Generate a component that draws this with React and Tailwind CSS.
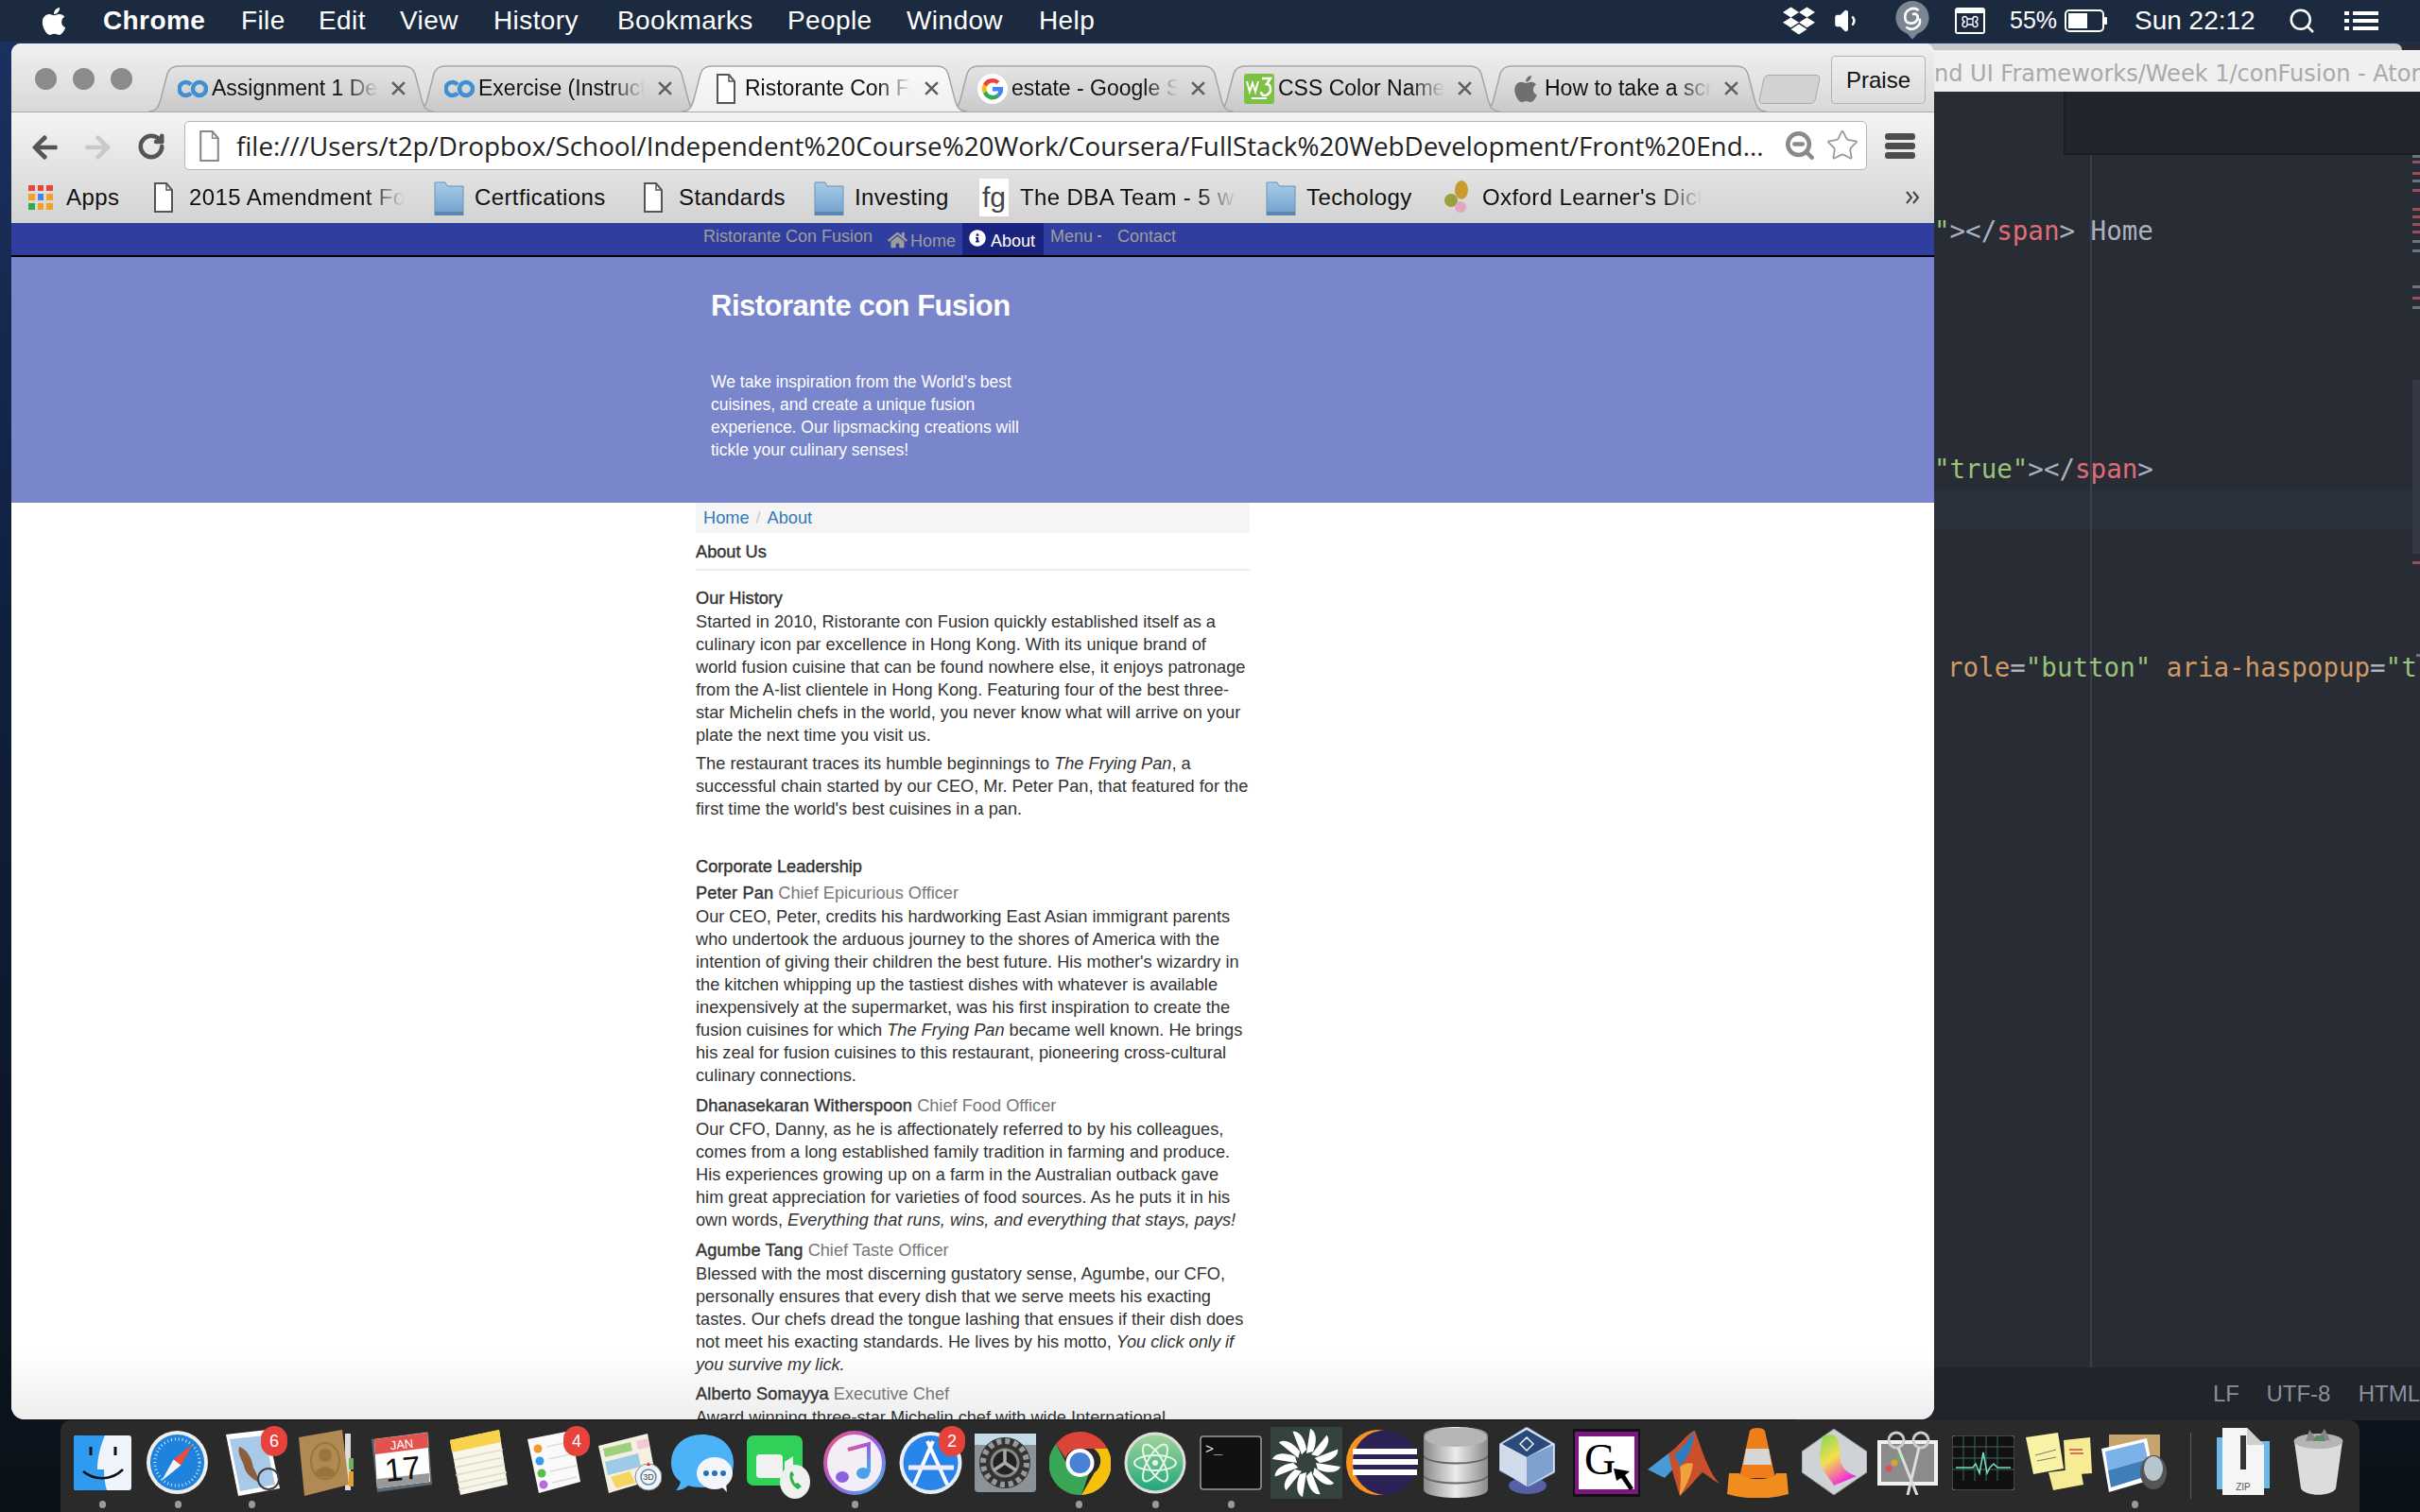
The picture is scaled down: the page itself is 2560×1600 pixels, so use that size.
import { FaApple, FaDropbox, FaHome, FaInfoCircle, FaArrowLeft, FaArrowRight } from "react-icons/fa";
import { RotateCw, Search, Star, Volume1, ZoomOut } from "lucide-react";

const FileIcon = ({ className }) => (
  <svg viewBox="0 0 20 32" className={className}>
    <path d="M1 1h12l6 7v23H1z" fill="#fff" stroke="#555" strokeWidth="2" />
    <path d="M13 1v7h6" fill="none" stroke="#555" strokeWidth="1.5" />
  </svg>
);

const FolderIcon = () => (
  <svg viewBox="0 0 32 38" className="h-[38px] w-[32px] shrink-0">
    <defs>
      <linearGradient id="fold" x1="0" y1="0" x2="0" y2="1">
        <stop offset="0" stopColor="#a9cbe8" />
        <stop offset="1" stopColor="#6fa0cc" />
      </linearGradient>
    </defs>
    <path d="M1 3h11l2 4h17v31H1z" fill="url(#fold)" stroke="#6d93b5" strokeWidth="1" />
    <rect x="1" y="34" width="30" height="4" fill="#5b86ad" />
  </svg>
);

const Coursera = () => (
  <svg viewBox="0 0 32 22" className="h-[22px] w-[32px] shrink-0">
    <path d="M14 6.500A7 7 0 1 0 14 15.500" fill="none" stroke="#3f8fd2" strokeWidth="4.5" />
    <circle cx="23" cy="11" r="7" fill="none" stroke="#3f8fd2" strokeWidth="4.5" />
  </svg>
);

const GoogleG = () => (
  <svg viewBox="0 0 32 32" className="h-[32px] w-[32px] shrink-0">
    <circle cx="16" cy="16" r="16" fill="#fff" />
    <path d="M16 5a11 11 0 0 1 7.500 3l-3.200 3A6.600 6.600 0 0 0 9.800 13.800L6 11A11 11 0 0 1 16 5z" fill="#ea4335" />
    <path d="M6 11l3.800 2.800a6.800 6.800 0 0 0 0 4.400L6 21a11 11 0 0 1 0-10z" fill="#fbbc05" />
    <path d="M6 21l3.800-2.800a6.600 6.600 0 0 0 10 3.500l3.600 2.800A11 11 0 0 1 6 21z" fill="#34a853" />
    <path d="M27 14H16v4.400h6.300a5.500 5.500 0 0 1-2.500 3.300l3.600 2.800A11 11 0 0 0 27 14z" fill="#4285f4" />
  </svg>
);

const W3 = () => (
  <svg viewBox="0 0 32 32" className="h-[32px] w-[32px] shrink-0">
    <rect width="32" height="32" rx="3" fill="#7cc242" />
    <path d="M3 8l3 11 3-9 3 9 3-11" fill="none" stroke="#fff" strokeWidth="2" />
    <path d="M19 5h9l-4 6c3 0 4 3 4 6s-3 6-6 6-4-2-4-4" fill="none" stroke="#fff" strokeWidth="2.5" />
    <rect x="8" y="25" width="16" height="2" fill="#fff" />
  </svg>
);

const tabs = [
  { label: "Assignment 1 Description", icon: <Coursera />, z: "z-[6]" },
  { label: "Exercise (Instructions)", icon: <Coursera />, z: "z-[5]" },
  { label: "Ristorante Con Fusion", icon: <FileIcon className="h-[32px] w-[20px] shrink-0" />, z: "z-[9]", active: true },
  { label: "estate - Google Search", icon: <GoogleG />, z: "z-[4]" },
  { label: "CSS Color Names", icon: <W3 />, z: "z-[3]" },
  { label: "How to take a screenshot", icon: <FaApple className="h-[32px] w-[30px] shrink-0 text-[#6f6f6f]" />, z: "z-[2]" },
];

const Tab = ({ label, icon, z, active }) => (
  <div className={`relative -mr-[20px] flex h-[49px] w-[302px] shrink-0 items-center pl-[31px] ${z}`}>
    <svg viewBox="0 0 302 49" preserveAspectRatio="none" className="absolute inset-0 h-full w-full">
      <defs>
        <linearGradient id="tabOn" x1="0" y1="0" x2="0" y2="1">
          <stop offset="0" stopColor="#fafafa" />
          <stop offset="1" stopColor="#efefef" />
        </linearGradient>
        <linearGradient id="tabOff" x1="0" y1="0" x2="0" y2="1">
          <stop offset="0" stopColor="#e4e4e4" />
          <stop offset="1" stopColor="#c9c9c9" />
        </linearGradient>
      </defs>
      <path
        d="M0 49C8 49 11 44 13 36L20 9C22 3 26 1 32 1H270C276 1 280 3 282 9L289 36C291 44 294 49 302 49"
        fill={active ? "url(#tabOn)" : "url(#tabOff)"}
        stroke="#a5a5a5"
        strokeWidth="1.5"
      />
    </svg>
    <div className="relative flex w-[225px] items-center gap-[4px]">
      <div className="flex w-[32px] shrink-0 justify-center">{icon}</div>
      <span className="w-[180px] overflow-hidden whitespace-nowrap text-[23px] text-[#111] [mask-image:linear-gradient(to_right,black_78%,transparent_98%)]">
        {label}
      </span>
    </div>
    <svg viewBox="0 0 16 16" className="relative h-[17px] w-[17px] shrink-0">
      <path d="M2 2l12 12M14 2L2 14" stroke="#5f5f5f" strokeWidth="2.4" />
    </svg>
  </div>
);

const Bookmark = ({ icon, label, text, fade }) => (
  <div className="flex shrink-0 items-center">
    {icon}
    <span
      className={
        "overflow-hidden whitespace-nowrap text-[24px] tracking-[0.4px] text-[#111] " + text + (fade ? " [mask-image:linear-gradient(to_right,black_82%,transparent)]" : "")
      }
    >
      {label}
    </span>
  </div>
);

const AppsIcon = () => (
  <div className="grid h-[26px] w-[26px] shrink-0 grid-cols-3 gap-[3px]">
    {["bg-[#e8453c]", "bg-[#e8453c]", "bg-[#e8453c]", "bg-[#f4a020]", "bg-[#3f87e8]", "bg-[#f4a020]", "bg-[#34a853]", "bg-[#f4a020]", "bg-[#f4a020]"].map((c, i) => (
      <span key={i} className={c} />
    ))}
  </div>
);

const FgIcon = () => (
  <div className="flex h-[40px] w-[31px] shrink-0 items-center justify-center bg-white text-[30px] leading-none text-[#444]">
    fg
  </div>
);

const OxfordIcon = () => (
  <svg viewBox="0 0 28 38" className="h-[38px] w-[28px] shrink-0">
    <ellipse cx="19" cy="11" rx="7" ry="10" fill="#c89b2c" />
    <circle cx="8" cy="22" r="7" fill="#9aa13a" />
    <circle cx="18" cy="29" r="6" fill="#e3a6c0" />
  </svg>
);

const Chevrons = () => (
  <svg viewBox="0 0 16 14" className="h-[16px] w-[16px]">
    <path d="M2 1l5 6-5 6M9 1l5 6-5 6" fill="none" stroke="#444" strokeWidth="2" />
  </svg>
);

const Toolbar = () => (
  <div className="flex h-[72px] items-start">
    <FaArrowLeft className="ml-[19px] mt-[22px] h-[30px] w-[33px] text-[#555]" />
    <FaArrowRight className="ml-[23px] mt-[22px] h-[30px] w-[33px] text-[#c9c9c9]" />
    <RotateCw className="ml-[25px] mt-[21px] h-[30px] w-[30px] text-[#555]" strokeWidth={3.6} />
    <div className="ml-[20px] mt-[9px] flex h-[52px] w-[1780px] items-center rounded-[5px] border border-[#b5b5b5] bg-white pl-[14px] pr-[8px]">
      <FileIcon className="h-[33px] w-[23px] shrink-0 opacity-70" />
      <span className="ml-[17px] w-[1619px] shrink-0 overflow-hidden whitespace-nowrap font-['Open_Sans',sans-serif] text-[27.8px] leading-[50px] text-[#222]">
        file:///Users/t2p/Dropbox/School/Independent%20Course%20Work/Coursera/FullStack%20WebDevelopment/Front%20End...
      </span>
      <ZoomOut className="ml-[18px] h-[34px] w-[34px] shrink-0 text-[#8a8a8a]" strokeWidth={3.2} />
      <Star className="ml-[10px] h-[36px] w-[36px] shrink-0 text-[#9a9a9a]" strokeWidth={1.2} />
    </div>
    <div className="ml-[19px] mt-[22px] flex w-[32px] flex-col gap-[3px]">
      <span className="h-[7px] rounded-[3px] bg-[#4d4d4d]" />
      <span className="h-[7px] rounded-[3px] bg-[#4d4d4d]" />
      <span className="h-[7px] rounded-[3px] bg-[#4d4d4d]" />
    </div>
  </div>
);

const Bookmarks = () => (
  <div className="relative flex h-[45px] items-center pb-[10px] pl-[18px]">
    <Bookmark icon={<AppsIcon />} label="Apps" text="ml-[14px] w-[93px]" />
    <Bookmark icon={<FileIcon className="h-[32px] w-[20px] shrink-0" />} label="2015 Amendment Forms" text="ml-[17px] mr-[31px] w-[228px]" fade />
    <Bookmark icon={<FolderIcon />} label="Certfications" text="ml-[11px] w-[179px]" />
    <Bookmark icon={<FileIcon className="h-[32px] w-[20px] shrink-0" />} label="Standards" text="ml-[17px] w-[143px]" />
    <Bookmark icon={<FolderIcon />} label="Investing" text="ml-[11px] w-[132px]" />
    <Bookmark icon={<FgIcon />} label="The DBA Team - 5 world" text="ml-[12px] mr-[31px] w-[229px]" fade />
    <Bookmark icon={<FolderIcon />} label="Techology" text="ml-[11px] w-[145px]" />
    <Bookmark icon={<OxfordIcon />} label="Oxford Learner's Dictionaries" text="ml-[13px] w-[232px]" fade />
    <div className="ml-[215px]">
      <Chevrons />
    </div>
  </div>
);

const NavBar = () => (
  <div className="flex h-[36px] shrink-0 border-b-2 border-black bg-[#303f9f] pl-[732px] text-[18px] leading-[28px] text-[#9d9d9d]">
    <span className="w-[195px] whitespace-nowrap">Ristorante Con Fusion</span>
    <div className="flex w-[79px] items-start">
      <FaHome className="mt-[8px] h-[20px] w-[21px]" />
      <span className="ml-[3px] mt-[5px]">Home</span>
    </div>
    <div className="flex h-[34px] w-[86px] items-start bg-[#1a237e] pl-[7px] text-white">
      <FaInfoCircle className="mt-[7px] h-[18px] w-[18px]" />
      <span className="ml-[5px] mt-[5px]">About</span>
    </div>
    <span className="ml-[7px]">Menu</span>
    <span className="ml-[5px] mt-[13px] h-[2px] w-[4px] bg-[#9d9d9d]" />
    <span className="ml-[17px]">Contact</span>
  </div>
);

const Jumbotron = () => (
  <div className="h-[260px] shrink-0 bg-[#7986cb] pl-[740px] pt-[32px] text-white">
    <h1 className="text-[31px] font-bold leading-[40px] tracking-[-0.5px]">Ristorante con Fusion</h1>
    <p className="mt-[48px] text-[17.5px] leading-[24px]">
      We take inspiration from the World's best
      <br />
      cuisines, and create a unique fusion
      <br />
      experience. Our lipsmacking creations will
      <br />
      tickle your culinary senses!
    </p>
  </div>
);

const Lines = ({ className, children }) => <p className={"whitespace-nowrap text-[18.2px] leading-[24px] " + className}>{children}</p>;

const Person = ({ className, name, role }) => (
  <p className={"whitespace-nowrap text-[18.2px] leading-[24px] " + className}>
    <span className="tracking-[0.15px] text-[#333] [-webkit-text-stroke:0.4px]">{name}</span> <span className="text-[#777]">{role}</span>
  </p>
);

const Article = () => (
  <div className="relative ml-[724px] w-[586px] text-[#333]">
    <div className="flex h-[32px] items-center rounded-[4px] bg-[#f5f5f5] pl-[8px] pt-[1px] text-[18.2px] text-[#337ab7]">
      <span>Home</span>
      <span className="mx-[7px] text-[#ccc]">/</span>
      <span>About</span>
    </div>
    <h2 className="mt-[8px] text-[18.2px] leading-[24px] [-webkit-text-stroke:0.4px]">About Us</h2>
    <hr className="mt-[6px] border-t-2 border-[#eee]" />
    <h3 className="mt-[17px] text-[18.2px] leading-[24px] [-webkit-text-stroke:0.4px]">Our History</h3>
    <Lines className="mt-[1px]">
      Started in 2010, Ristorante con Fusion quickly established itself as a
      <br />
      culinary icon par excellence in Hong Kong. With its unique brand of
      <br />
      world fusion cuisine that can be found nowhere else, it enjoys patronage
      <br />
      from the A-list clientele in Hong Kong. Featuring four of the best three-
      <br />
      star Michelin chefs in the world, you never know what will arrive on your
      <br />
      plate the next time you visit us.
    </Lines>
    <Lines className="mt-[6px]">
      The restaurant traces its humble beginnings to <em>The Frying Pan</em>, a
      <br />
      successful chain started by our CEO, Mr. Peter Pan, that featured for the
      <br />
      first time the world's best cuisines in a pan.
    </Lines>
    <h3 className="mt-[37px] text-[18.2px] leading-[24px] [-webkit-text-stroke:0.4px]">Corporate Leadership</h3>
    <Person className="mt-[4px]" name="Peter Pan" role="Chief Epicurious Officer" />
    <Lines className="mt-[1px]">
      Our CEO, Peter, credits his hardworking East Asian immigrant parents
      <br />
      who undertook the arduous journey to the shores of America with the
      <br />
      intention of giving their children the best future. His mother's wizardry in
      <br />
      the kitchen whipping up the tastiest dishes with whatever is available
      <br />
      inexpensively at the supermarket, was his first inspiration to create the
      <br />
      fusion cuisines for which <em>The Frying Pan</em> became well known. He brings
      <br />
      his zeal for fusion cuisines to this restaurant, pioneering cross-cultural
      <br />
      culinary connections.
    </Lines>
    <Person className="mt-[8px]" name="Dhanasekaran Witherspoon" role="Chief Food Officer" />
    <Lines className="mt-[1px]">
      Our CFO, Danny, as he is affectionately referred to by his colleagues,
      <br />
      comes from a long established family tradition in farming and produce.
      <br />
      His experiences growing up on a farm in the Australian outback gave
      <br />
      him great appreciation for varieties of food sources. As he puts it in his
      <br />
      own words, <em>Everything that runs, wins, and everything that stays, pays!</em>
    </Lines>
    <Person className="mt-[8px]" name="Agumbe Tang" role="Chief Taste Officer" />
    <Lines className="mt-[1px]">
      Blessed with the most discerning gustatory sense, Agumbe, our CFO,
      <br />
      personally ensures that every dish that we serve meets his exacting
      <br />
      tastes. Our chefs dread the tongue lashing that ensues if their dish does
      <br />
      not meet his exacting standards. He lives by his motto, <em>You click only if</em>
      <br />
      <em>you survive my lick.</em>
    </Lines>
    <Person className="mt-[7px]" name="Alberto Somayya" role="Executive Chef" />
    <Lines className="mt-[1px]">Award winning three-star Michelin chef with wide International</Lines>
  </div>
);

const ChromeWindow = () => (
  <div className="absolute left-[12px] top-[46px] z-10 flex h-[1456px] w-[2034px] flex-col overflow-hidden rounded-b-[14px] rounded-t-[10px] bg-white">
    <div className="pointer-events-none absolute inset-x-0 bottom-0 h-[72px] bg-gradient-to-b from-white to-[#eeeeee]" />
    <div className="relative flex h-[72px] shrink-0 items-end bg-gradient-to-b from-[#f0f0f0] to-[#d9d9d9]">
      <div className="absolute left-[25px] top-[26px] flex gap-[17px]">
        <span className="h-[23px] w-[23px] rounded-full bg-[#8b8b8b]" />
        <span className="h-[23px] w-[23px] rounded-full bg-[#8b8b8b]" />
        <span className="h-[23px] w-[23px] rounded-full bg-[#8b8b8b]" />
      </div>
      <div className="ml-[145px] flex items-end">
        {tabs.map((t) => (
          <Tab key={t.label} {...t} />
        ))}
      </div>
      <div className="relative z-[1] mb-[8px] ml-[14px] h-[31px] w-[60px] -skew-x-[12deg] rounded-[5px] border border-[#a9a9a9] bg-[#d2d2d2]" />
      <div className="absolute right-[9px] top-[13px] flex h-[51px] w-[100px] items-center justify-center rounded-[4px] border border-[#b3b3b3] bg-gradient-to-b from-[#efefef] to-[#dcdcdc] text-[24px] text-[#111]">
        Praise
      </div>
    </div>
    <div className="z-[1] shrink-0 border-t-[1.5px] border-[#a8a8a8] bg-gradient-to-b from-[#f4f4f4] to-[#d3d3d3]">
      <Toolbar />
      <Bookmarks />
    </div>
    <NavBar />
    <Jumbotron />
    <Article />
  </div>
);

const Code = ({ className, children }) => (
  <div className={"h-[28px] whitespace-nowrap font-['DejaVu_Sans_Mono',monospace] text-[27.5px] leading-[28px] " + className}>{children}</div>
);

const AtomWindow = () => (
  <div className="absolute left-[1900px] top-[46px] flex h-[1457px] w-[660px] flex-col bg-[#282c34]">
    <div className="ml-[20px] mr-[19px] h-[7px] rounded-t-[8px] bg-[#c8c8c8]" />
    <div className="flex h-[44px] shrink-0 items-center overflow-hidden whitespace-nowrap bg-[#f0f0f0] pl-[146px] pt-[5px] font-['DejaVu_Sans',sans-serif] text-[24px] text-[#a9a9a9]">
      nd UI Frameworks/Week 1/conFusion - Atom
    </div>
    <div className="relative flex-1">
      <div className="ml-[283px] h-[67px] border-b-2 border-l-2 border-[#1b1e24] bg-[#21252b]" />
      <div className="absolute bottom-0 left-[311px] top-[67px] w-[2px] bg-[#3a3f4b]" />
      <div className="absolute bottom-0 right-0 top-[67px] w-[8px]">
        <svg viewBox="0 0 8 540" className="h-[540px] w-[8px]">
          {[[0, "#6b7280"], [6, "#9c4e58"], [18, "#9c4e58"], [26, "#6b7280"], [36, "#9c4e58"], [56, "#9c4e58"], [64, "#9c4e58"], [72, "#9c4e58"], [80, "#9c4e58"], [90, "#6b7280"], [100, "#6b7280"], [138, "#6b7280"], [150, "#9c4e58"], [160, "#6b7280"]].map(([y, c]) => (
            <rect key={y} x="0" y={y} width="8" height="3" fill={c} />
          ))}
          <rect x="0" y="238" width="8" height="184" fill="#343944" />
          <rect x="0" y="430" width="8" height="3" fill="#9c4e58" />
          <rect x="4" y="528" width="4" height="3" fill="#6b7280" />
        </svg>
      </div>
      <Code className="relative mt-[66px] pl-[146px] text-[#abb2bf]">
        <span className="text-[#98c379]">"</span>&gt;&lt;/<span className="text-[#e06c75]">span</span>&gt; Home
      </Code>
      <Code className="relative mt-[224px] pl-[146px] text-[#abb2bf]">
        <span className="text-[#98c379]">"true"</span>&gt;&lt;/<span className="text-[#e06c75]">span</span>&gt;
      </Code>
      <div className="mt-[9px] h-[41px] bg-[#2c323c]" />
      <Code className="relative mt-[132px] pl-[160px] text-[#abb2bf]">
        <span className="text-[#d19a66]">role</span>=<span className="text-[#98c379]">"button"</span> <span className="text-[#d19a66]">aria-haspopup</span>=<span className="text-[#98c379]">"t</span>
      </Code>
    </div>
    <div className="relative flex h-[56px] shrink-0 items-center bg-[#21252b] pl-[441px] text-[24px] text-[#8a909c]">
      <span className="w-[58px]">LF</span>
      <span className="w-[100px]">UTF-8</span>
      <span>HTML</span>
    </div>
  </div>
);

const MenuBar = () => (
  <div className="flex h-[44px] items-center bg-[#1c2a40] pl-[42px] text-[28px] tracking-[0.4px] text-white">
    <FaApple className="h-[33px] w-[30px]" />
    <span className="ml-[37px] w-[146px] font-bold">Chrome</span>
    <span className="w-[82px]">File</span>
    <span className="w-[86px]">Edit</span>
    <span className="w-[99px]">View</span>
    <span className="w-[131px]">History</span>
    <span className="w-[180px]">Bookmarks</span>
    <span className="w-[126px]">People</span>
    <span className="w-[140px]">Window</span>
    <span className="w-[58px]">Help</span>
    <FaDropbox className="ml-[729px] h-[34px] w-[34px]" />
    <Volume1 className="ml-[20px] h-[30px] w-[30px] fill-white" strokeWidth={2} />
    <svg viewBox="0 0 38 40" className="ml-[32px] h-[44px] w-[42px]">
      <circle cx="19" cy="17" r="16" fill="#7c8593" />
      <path d="M19 38l-8-9h16z" fill="#7c8593" />
      <path d="M25 10a8 8 0 0 0-13 7c0 6 8 7 11 3s0-8-4-6M13 26a8 8 0 0 0 13-8" fill="none" stroke="#fff" strokeWidth="2.4" />
    </svg>
    <svg viewBox="0 0 32 28" className="ml-[24px] h-[28px] w-[32px]">
      <rect width="32" height="28" rx="3" fill="#fff" />
      <rect x="2" y="6" width="28" height="20" fill="#1c2a40" />
      <path d="M13 12h6v6h-6zM13 12a2.500 2.500 0 1 0-2.500 2.500M19 12a2.500 2.500 0 1 1 2.500 2.500M13 18a2.500 2.500 0 1 1-2.500-2.500M19 18a2.500 2.500 0 1 0 2.500-2.500" fill="none" stroke="#fff" strokeWidth="1.3" />
    </svg>
    <span className="ml-[26px] w-[58px] text-[25px] tracking-normal">55%</span>
    <svg viewBox="0 0 46 24" className="h-[24px] w-[46px]">
      <rect x="1" y="1" width="40" height="22" rx="4" fill="none" stroke="#fff" strokeWidth="2" />
      <rect x="4" y="4" width="20" height="16" fill="#fff" />
      <rect x="42" y="8" width="3" height="8" rx="1" fill="#fff" />
    </svg>
    <span className="ml-[28px] w-[162px] whitespace-nowrap tracking-normal">Sun 22:12</span>
    <Search className="h-[30px] w-[30px]" strokeWidth={2} />
    <svg viewBox="0 0 36 22" className="ml-[30px] h-[22px] w-[36px]">
      <path d="M0 1h5v4H0zM9 1h27v4H9zM0 9h5v4H0zM9 9h27v4H9zM0 17h5v4H0zM9 17h27v4H9z" fill="#fff" />
    </svg>
  </div>
);

/* dock icons */
const Finder = (p) => (
  <svg viewBox="0 0 61 58" {...p}>
    <rect width="61" height="58" rx="3" fill="#eef4fa" />
    <path d="M3 0h30c-6 14-8 26-8 36h7c0 8 1 16 3 22H3a3 3 0 0 1-3-3V3a3 3 0 0 1 3-3z" fill="#2f9bf0" />
    <path d="M18 12v9M44 12v9" stroke="#111" strokeWidth="3" />
    <path d="M10 38c12 10 30 10 42-2" fill="none" stroke="#111" strokeWidth="2.5" />
  </svg>
);
const Safari = (p) => (
  <svg viewBox="0 0 66 68" {...p}>
    <ellipse cx="33" cy="34" rx="33" ry="34" fill="#eee" />
    <ellipse cx="33" cy="34" rx="29" ry="30" fill="#1f82dc" />
    <ellipse cx="33" cy="34" rx="24" ry="25" fill="none" stroke="#cfe6fa" strokeWidth="3" strokeDasharray="1 3" />
    <path d="M50 14 29 31l8 6z" fill="#ef4a3c" />
    <path d="M16 54 37 37l-8-6z" fill="#f3f3f3" />
  </svg>
);
const Mail = (p) => (
  <svg viewBox="0 0 61 70" {...p}>
    <path d="M2 5l44-5 13 62-44 8z" fill="#fff" />
    <path d="M6 10l37-4 11 52-37 7z" fill="#a9c9e8" />
    <path d="M16 18c7 2 13 10 15 22 3 5 5 10 6 16-6-4-14-8-16-18-2-7-7-12-5-20z" fill="#8b5e3c" />
    <circle cx="47" cy="52" r="11" fill="none" stroke="#3f3f3f" strokeWidth="2" />
  </svg>
);
const Contacts = (p) => (
  <svg viewBox="0 0 59 70" {...p}>
    <path d="M49 4h6v60h-6z" fill="#ddd" />
    <path d="M53 30h5v12h-5z" fill="#6cb35a" />
    <path d="M53 44h5v16h-5z" fill="#e89d2b" />
    <path d="M0 8 46 0l7 58-47 12z" fill="#b08a52" />
    <ellipse cx="28" cy="33" rx="15" ry="19" fill="none" stroke="#98753f" strokeWidth="2" />
    <circle cx="28" cy="27" r="7" fill="#98753f" />
    <path d="M17 47c2-10 20-10 22 0-6 4-16 4-22 0z" fill="#98753f" />
  </svg>
);
const Calendar = (p) => (
  <svg viewBox="0 0 64 64" {...p}>
    <path d="M0 8 60 0l4 56-58 8z" fill="#5d6a72" />
    <path d="M3 8 59 1l3 52-56 7z" fill="#fff" />
    <path d="M3 8 59 1l1 16-56 7z" fill="#e2534f" />
    <path d="M6 50 61 44v9L6 60z" fill="#999" />
    <text x="32" y="18" textAnchor="middle" fontSize="13" fill="#fff" transform="rotate(-6 32 14)">JAN</text>
    <text x="33" y="51" textAnchor="middle" fontSize="34" fill="#111" transform="rotate(-6 33 40)">17</text>
  </svg>
);
const Notes = (p) => (
  <svg viewBox="0 0 61 69" {...p}>
    <path d="M0 11 52 0l9 58-50 11z" fill="#f8f6e8" />
    <path d="M0 11 52 0l2 13L2 24z" fill="#f8d24a" />
    <path d="M4 32l52-11M5 40l52-11M6 48l52-11M8 56l52-11M9 63l50-11" stroke="#dcdac8" strokeWidth="1.5" />
  </svg>
);
const Reminders = (p) => (
  <svg viewBox="0 0 56 66" {...p}>
    <path d="M0 9 46 0l10 54-44 12z" fill="#fafafa" />
    <circle cx="11" cy="19" r="4.5" fill="#f39a2b" />
    <circle cx="13" cy="32" r="4.5" fill="#3a9ae8" />
    <circle cx="15" cy="45" r="4.5" fill="#55c04a" />
    <circle cx="17" cy="57" r="4.5" fill="#bb6be0" />
    <path d="M20 17l28-6M22 30l28-6M24 43l28-6M26 55l26-6" stroke="#ddd" strokeWidth="1.5" />
  </svg>
);
const Maps = (p) => (
  <svg viewBox="0 0 67 63" {...p}>
    <path d="M0 13 52 0l9 48-50 15z" fill="#f5f0e0" />
    <path d="M5 16l29-7 2 9-29 7z" fill="#9fd07c" />
    <path d="M40 8l12-3 2 9-12 3z" fill="#f4c9d6" />
    <path d="M7 30l35-9 3 14-35 9z" fill="#9ccbe8" />
    <path d="M13 46l20-6 6 12-20 6z" fill="#f5d560" />
    <circle cx="53" cy="46" r="14" fill="#f4f4f4" stroke="#8a8a8a" />
    <circle cx="53" cy="46" r="8" fill="none" stroke="#4c87b8" strokeWidth="1.5" />
    <text x="53" y="49" textAnchor="middle" fontSize="9" fill="#444">3D</text>
    <path d="M53 30l-2 4h4z" fill="#d33" />
  </svg>
);
const Messages = (p) => (
  <svg viewBox="0 0 66 61" {...p}>
    <path d="M33 0C14 0 0 12 0 30c0 9 4 16 10 20-1 4-3 7-5 9 5 0 10-2 13-5 3 1 8 2 15 2 19 0 33-8 33-26C66 12 52 0 33 0z" fill="#4db3f8" />
    <ellipse cx="46" cy="41" rx="19" ry="17" fill="#f2f6fb" />
    <path d="M52 54l7 7-1-9z" fill="#f2f6fb" />
    <circle cx="37" cy="41" r="3" fill="#2f6fb5" />
    <circle cx="46" cy="41" r="3" fill="#2f6fb5" />
    <circle cx="55" cy="41" r="3" fill="#2f6fb5" />
  </svg>
);
const FaceTime = (p) => (
  <svg viewBox="0 0 67 67" {...p}>
    <rect width="59" height="53" rx="7" fill="#2fd158" />
    <rect x="10" y="20" width="28" height="25" rx="4" fill="#f1f1f1" />
    <path d="M40 28l9-6v22l-9-6z" fill="#f1f1f1" />
    <ellipse cx="51" cy="49" rx="16" ry="18" fill="#eef2ee" />
    <path d="M46 39c-2 6 1 14 8 18l4-3-4-4-3 1-3-7 2-2-2-4z" fill="#2fb34e" />
  </svg>
);
const ITunes = (p) => (
  <svg viewBox="0 0 66 68" {...p}>
    <defs>
      <linearGradient id="itr" x1="0" y1="0" x2="1" y2="1">
        <stop offset="0" stopColor="#f05a7a" />
        <stop offset="0.5" stopColor="#a05ae0" />
        <stop offset="1" stopColor="#38b5ee" />
      </linearGradient>
    </defs>
    <ellipse cx="33" cy="34" rx="31" ry="32" fill="#f3eef5" stroke="url(#itr)" strokeWidth="4" />
    <path d="M26 20l22-6v30" fill="none" stroke="url(#itr)" strokeWidth="4" />
    <path d="M26 20v28" stroke="url(#itr)" strokeWidth="4" />
    <ellipse cx="20" cy="49" rx="7" ry="6" fill="#8a64e0" />
    <ellipse cx="42" cy="45" rx="7" ry="6" fill="#4aa0ea" />
  </svg>
);
const AppStore = (p) => (
  <svg viewBox="0 0 67 66" {...p}>
    <ellipse cx="33.5" cy="33" rx="33" ry="33" fill="#e8eef5" />
    <ellipse cx="33.5" cy="33" rx="29" ry="29" fill="#2a85ea" />
    <path d="M36 10 16 56M30 10l21 46" stroke="#fff" strokeWidth="4" />
    <path d="M10 38h48" stroke="#eef" strokeWidth="5" />
  </svg>
);
const SysPrefs = (p) => (
  <svg viewBox="0 0 65 62" {...p}>
    <rect width="65" height="62" rx="4" fill="#8c9398" />
    <rect width="65" height="12" fill="#c3dbe6" />
    <circle cx="32" cy="31" r="27" fill="#333" />
    <circle cx="32" cy="31" r="23" fill="none" stroke="#999" strokeWidth="6" strokeDasharray="5 4" />
    <circle cx="32" cy="31" r="14" fill="#222" stroke="#888" strokeWidth="3" />
    <path d="M32 31V17M32 31l12 8M32 31l-12 8" stroke="#aaa" strokeWidth="3.5" />
  </svg>
);
const ChromeLogo = (p) => (
  <svg viewBox="0 0 65 67" {...p}>
    <path d="M32.5 0a32.5 33.5 0 0 1 29 18H32a15 15 0 0 0-15 10L7 13A32.500 33.500 0 0 1 32.500 0z" fill="#db4437" />
    <path d="M61.500 18A33 33 0 0 1 34 67l14-24a15 15 0 0 0-1-25z" fill="#f4c20d" />
    <path d="M34 67A33 33 0 0 1 7 13l12 22a15 15 0 0 0 23 9z" fill="#3aa757" />
    <circle cx="32.5" cy="33" r="15" fill="#fff" />
    <circle cx="32.500" cy="33" r="11" fill="#4a82d8" />
  </svg>
);
const AtomLogo = (p) => (
  <svg viewBox="0 0 66 66" {...p}>
    <defs>
      <linearGradient id="atg" x1="0" y1="0" x2="0" y2="1">
        <stop offset="0" stopColor="#a2d69a" />
        <stop offset="1" stopColor="#1fa67a" />
      </linearGradient>
    </defs>
    <circle cx="33" cy="33" r="31" fill="url(#atg)" stroke="#ddd" strokeWidth="3" />
    <g fill="none" stroke="#e8f5e8" strokeWidth="2">
      <ellipse cx="33" cy="33" rx="22" ry="8" transform="rotate(60 33 33)" />
      <ellipse cx="33" cy="33" rx="22" ry="8" transform="rotate(-60 33 33)" />
      <ellipse cx="33" cy="33" rx="22" ry="8" />
    </g>
    <circle cx="33" cy="33" r="3" fill="#e8f5e8" />
  </svg>
);
const Terminal = (p) => (
  <svg viewBox="0 0 66 58" {...p}>
    <rect x="1" y="1" width="64" height="56" rx="3" fill="#111" stroke="#999" strokeWidth="1.5" />
    <text x="6" y="19" fontSize="15" fontFamily="Liberation Mono" fill="#eee">&gt;_</text>
  </svg>
);
const Pinwheel = (p) => (
  <svg viewBox="0 0 76 76" {...p}>
    <rect width="76" height="76" fill="#35433f" />
    {[0, 30, 60, 90, 120, 150, 180, 210, 240, 270, 300, 330].map((a) => (
      <path key={a} d="M38 28 42 2c6 2 8 12 3 24z" fill="#fff" transform={`rotate(${a} 38 38)`} />
    ))}
  </svg>
);
const Eclipse = (p) => (
  <svg viewBox="0 0 76 69" {...p}>
    <ellipse cx="33" cy="34.5" rx="33" ry="34.5" fill="#f7941e" />
    <ellipse cx="41" cy="34.500" rx="34" ry="34" fill="#2c2255" />
    <rect x="7" y="20" width="68" height="6" fill="#fff" />
    <rect x="7" y="31" width="69" height="6" fill="#fff" />
    <rect x="7" y="42" width="68" height="6" fill="#fff" />
  </svg>
);
const Database = (p) => (
  <svg viewBox="0 0 68 75" {...p}>
    <defs>
      <linearGradient id="dbg" x1="0" y1="0" x2="1" y2="0">
        <stop offset="0" stopColor="#8a8a8a" />
        <stop offset="0.5" stopColor="#ececec" />
        <stop offset="1" stopColor="#8a8a8a" />
      </linearGradient>
    </defs>
    <path d="M0 9c0-12 68-12 68 0v57c0 12-68 12-68 0z" fill="url(#dbg)" />
    <ellipse cx="34" cy="11" rx="33" ry="10" fill="#b5b5b5" />
    <path d="M0 31c8 10 60 10 68 0M0 52c8 10 60 10 68 0" fill="none" stroke="#666" strokeWidth="2" />
  </svg>
);
const VirtualBox = (p) => (
  <svg viewBox="0 0 59 71" {...p}>
    <ellipse cx="30" cy="62" rx="20" ry="9" fill="#5560a8" />
    <path d="M29 0 59 18v30L31 63 0 46V18z" fill="#dfe7f2" stroke="#6e8fc0" strokeWidth="1" />
    <path d="M29 3 55 18 29 32 3 18z" fill="#2a4a7c" />
    <path d="M29 32v31L2 46V19z" fill="#cfdaea" />
    <path d="M29 32v31l28-16V19z" fill="#7fa1d0" />
    <path d="M22 18l7-7 7 7-7 7z" fill="none" stroke="#e8f0f8" strokeWidth="1.5" />
  </svg>
);
const GIcon = (p) => (
  <svg viewBox="0 0 71 72" {...p}>
    <rect width="71" height="72" fill="#111" />
    <rect x="2" y="3" width="67" height="66" fill="#7b1780" />
    <rect x="6" y="8" width="59" height="56" fill="#fff" />
    <text x="12" y="48" fontSize="46" fontFamily="Liberation Serif" fill="#000">G</text>
    <path d="M43 42l17 3-5 4 9 14-4 2-9-13-5 3z" fill="#000" />
  </svg>
);
const Matlab = (p) => (
  <svg viewBox="0 0 76 69" {...p}>
    <path d="M0 41 22 24 33 34 18 50z" fill="#4a9ad8" />
    <path d="M22 24C32 18 44 0 50 0 56 16 64 44 76 56 68 52 62 46 58 44 52 50 44 60 34 69 30 56 26 44 22 24z" fill="#c9502a" />
    <path d="M50 0c-2 14-4 24-16 38-2-6-4-10-7-12 9-6 17-18 23-26z" fill="#2f7bbf" />
    <path d="M34 38c2 10 0 22 0 31 6-10 12-20 14-34-4-2-10 0-14 3z" fill="#f0a23c" />
  </svg>
);
const Vlc = (p) => (
  <svg viewBox="0 0 65 74" {...p}>
    <path d="M24 3c2-4 14-4 16 0l11 50H13z" fill="#ef7d1a" />
    <path d="M20 22h24l3 17H17z" fill="#d6d6d6" />
    <path d="M13 48H2L0 70c20 6 45 6 65 0l-2-22H52c-4 8-32 8-39 0z" fill="#f08d1e" />
  </svg>
);
const Grapher = (p) => (
  <svg viewBox="0 0 69 70" {...p}>
    <defs>
      <linearGradient id="gra" x1="0" y1="0" x2="0.5" y2="1">
        <stop offset="0" stopColor="#7dd85a" />
        <stop offset="0.5" stopColor="#f5e04a" />
        <stop offset="1" stopColor="#ef2fd8" />
      </linearGradient>
    </defs>
    <path d="M34 0 69 24v22L34 70 0 46V24z" fill="#cfd2d6" stroke="#8a8a8a" />
    <path d="M22 8c16-6 18 4 18 18 0 14 6 20 18 24L34 60c-6-10-10-12-14-24-2-8 0-16 2-28z" fill="url(#gra)" />
  </svg>
);
const Grab = (p) => (
  <svg viewBox="0 0 64 68" {...p}>
    <rect x="0" y="10" width="64" height="48" fill="#f2f2f2" />
    <rect x="4" y="14" width="56" height="40" fill="#8b8b8b" />
    <circle cx="12" cy="40" r="3.500" fill="#d9534f" />
    <circle cx="18" cy="34" r="3.500" fill="#d6a13a" />
    <circle cx="24" cy="28" r="3.500" fill="#5cb85c" />
    <g fill="none" stroke="#ddd" strokeWidth="3">
      <circle cx="20" cy="10" r="8" stroke="#ccc" />
      <circle cx="46" cy="10" r="8" stroke="#ccc" />
      <path d="M22 18l20 50M44 18 32 68" />
    </g>
  </svg>
);
const Activity = (p) => (
  <svg viewBox="0 0 66 58" {...p}>
    <rect width="66" height="58" rx="3" fill="#111" stroke="#777" />
    <path d="M0 12h66M0 24h66M0 36h66M12 0v48M24 0v48M36 0v48M48 0v48" stroke="#3a6a5e" strokeWidth="1" />
    <path d="M4 34h18l3-4 4 10 4-22 4 22 3-6 4-4 4 4h14" fill="none" stroke="#79e0c8" strokeWidth="1.5" />
  </svg>
);
const Stickies = (p) => (
  <svg viewBox="0 0 70 61" {...p}>
    <path d="M24 42l34-4 3 17-32 6z" fill="#f7ec95" />
    <path d="M40 8l28-3 2 38-28 2z" fill="#f7ec95" />
    <path d="M0 5 34 0l6 38-32 6z" fill="#f9f3a5" />
    <path d="M10 24l22-6M12 30l20-4" stroke="#777" strokeWidth="1" />
    <path d="M46 18h14M47 22h14" stroke="#d9443a" strokeWidth="1.5" />
  </svg>
);
const Preview = (p) => (
  <svg viewBox="0 0 69 61" {...p}>
    <rect x="8" y="0" width="54" height="34" fill="#c5a46d" />
    <path d="M0 15 48 4l8 43-48 14z" fill="#fff" />
    <path d="M4 18 45 8l4 18L7 38z" fill="#7cb2ea" />
    <path d="M7 38l42-12 3 17-42 13z" fill="#3f7eb8" />
    <ellipse cx="55" cy="40" rx="14" ry="18" fill="#555" />
    <ellipse cx="55" cy="36" rx="10" ry="13" fill="#b7c6cc" />
  </svg>
);
const Zip = (p) => (
  <svg viewBox="0 0 57 71" {...p}>
    <path d="M0 10h10v55H0zM46 14h10v50H46z" fill="#6cb8ea" />
    <path d="M6 0h26l18 18v53H6z" fill="#f5f5f5" />
    <path d="M32 0l18 18H32z" fill="#cfcfcf" />
    <rect x="25" y="8" width="6" height="36" fill="#333" />
    <text x="28" y="66" textAnchor="middle" fontSize="10" fill="#555">ZIP</text>
  </svg>
);
const Trash = (p) => (
  <svg viewBox="0 0 55 71" {...p}>
    <path d="M2 14c6-6 45-6 51 0l-7 50c-4 9-33 9-37 0z" fill="#dcdcdc" />
    <ellipse cx="27.5" cy="14" rx="26" ry="8" fill="#b5b5b5" />
    <path d="M14 14l4-12 8 11 8-12 6 12z" fill="#888" />
    <path d="M22 14l3-6h8l2 6z" fill="#5c8a62" />
  </svg>
);

const dockIcons = [
  [Finder, "ml-[14px] mt-[16px] h-[58px] w-[61px]"],
  [Safari, "ml-[16px] mt-[11px] h-[67px] w-[65px]"],
  [Mail, "ml-[17px] mt-[10px] h-[70px] w-[61px]"],
  [Contacts, "ml-[18px] mt-[10px] h-[70px] w-[59px]"],
  [Calendar, "ml-[18px] mt-[12px] h-[64px] w-[64px]"],
  [Notes, "ml-[19px] mt-[10px] h-[69px] w-[61px]"],
  [Reminders, "ml-[21px] mt-[11px] h-[66px] w-[56px]"],
  [Maps, "ml-[19px] mt-[14px] h-[63px] w-[67px]"],
  [Messages, "ml-[10px] mt-[15px] h-[61px] w-[66px]"],
  [FaceTime, "ml-[14px] mt-[16px] h-[67px] w-[67px]"],
  [ITunes, "ml-[14px] mt-[11px] h-[68px] w-[66px]"],
  [AppStore, "ml-[14px] mt-[12px] h-[66px] w-[67px]"],
  [SysPrefs, "ml-[13px] mt-[14px] h-[62px] w-[65px]"],
  [ChromeLogo, "ml-[14px] mt-[12px] h-[67px] w-[65px]"],
  [AtomLogo, "ml-[14px] mt-[12px] h-[66px] w-[66px]"],
  [Terminal, "ml-[14px] mt-[16px] h-[58px] w-[66px]"],
  [Pinwheel, "ml-[9px] mt-[7px] h-[76px] w-[76px]"],
  [Eclipse, "ml-[4px] mt-[10px] h-[69px] w-[76px]"],
  [Database, "ml-[6px] mt-[7px] h-[75px] w-[68px]"],
  [VirtualBox, "ml-[12px] mt-[7px] h-[71px] w-[59px]"],
  [GIcon, "ml-[19px] mt-[9px] h-[72px] w-[71px]"],
  [Matlab, "ml-[8px] mt-[11px] h-[69px] w-[76px]"],
  [Vlc, "ml-[8px] mt-[8px] h-[74px] w-[65px]"],
  [Grapher, "ml-[14px] mt-[9px] h-[70px] w-[69px]"],
  [Grab, "ml-[11px] mt-[11px] h-[68px] w-[64px]"],
  [Activity, "ml-[15px] mt-[16px] h-[58px] w-[66px]"],
  [Stickies, "ml-[12px] mt-[13px] h-[61px] w-[70px]"],
  [Preview, "ml-[10px] mt-[15px] h-[61px] w-[69px]"],
];

const dots = ["left-[41px]", "left-[121px]", "left-[199px]", "left-[837px]", "left-[1074px]", "left-[1155px]", "left-[1235px]", "left-[2191px]"];

const Badge = ({ className, n }) => (
  <span className={"absolute top-[6px] flex h-[32px] w-[28px] items-center justify-center rounded-full bg-[#e8423c] text-[18px] text-white " + className}>{n}</span>
);

const Dock = () => (
  <div className="absolute left-[64px] top-[1503px] flex h-[97px] w-[2432px] items-start rounded-t-[10px] bg-[#2a2a2a]">
    {dockIcons.map(([Icon, cls], i) => (
      <Icon key={i} className={"shrink-0 " + cls} />
    ))}
    <div className="ml-[25px] mt-[13px] h-[70px] w-[1px] shrink-0 bg-[#5d5d5d]" />
    <Zip className="ml-[27px] mt-[8px] h-[71px] w-[57px] shrink-0" />
    <Trash className="ml-[23px] mt-[8px] h-[71px] w-[55px] shrink-0" />
    <Badge className="left-[212px]" n="6" />
    <Badge className="left-[532px]" n="4" />
    <Badge className="left-[929px]" n="2" />
    {dots.map((d) => (
      <span key={d} className={"absolute top-[85px] h-[8px] w-[7px] rounded-full bg-[#9a9a9a] " + d} />
    ))}
  </div>
);

export default function App() {
  return (
    <div className="relative h-[1600px] w-[2560px] overflow-hidden bg-[linear-gradient(to_bottom,#1b3262_0%,#10203f_40%,#0a1218_100%)] font-['Liberation_Sans',sans-serif]">
      <MenuBar />
      <AtomWindow />
      <ChromeWindow />
      <Dock />
    </div>
  );
}
